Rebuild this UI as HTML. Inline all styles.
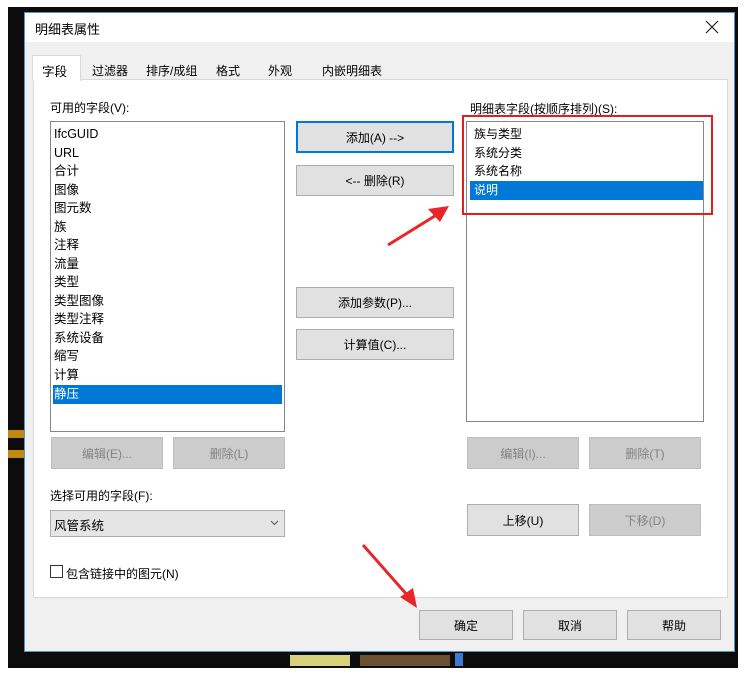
<!DOCTYPE html>
<html><head><meta charset="utf-8"><style>
*{box-sizing:border-box;margin:0;padding:0}
body{width:746px;height:675px;background:#fff;position:relative;overflow:hidden;font-family:"Liberation Sans","Noto Sans CJK SC",sans-serif;font-size:12px;color:#000}
.a{position:absolute}
.btn{position:absolute;background:#e1e1e1;border:1px solid #adadad;text-align:center;font-size:12px;display:flex;align-items:center;justify-content:center}
.dis{background:#cccccc;border-color:#bfbfbf;color:#838383}
.list{position:absolute;background:#fff;border:1px solid #828790}
.it{position:absolute;left:3px;height:19px;line-height:19px;font-size:12.5px}
.sel{background:#0078d7;color:#fff}
</style></head><body>
<div class="a" style="left:8px;top:7px;width:730px;height:661px;background:#0c0c0c"></div>
<div class="a" style="left:8px;top:430px;width:16px;height:8px;background:#c08a10"></div>
<div class="a" style="left:8px;top:450px;width:16px;height:8px;background:#c08a10"></div>
<div class="a" style="left:290px;top:655px;width:60px;height:11px;background:#d8d27a"></div>
<div class="a" style="left:360px;top:655px;width:90px;height:11px;background:#6a5030"></div>
<div class="a" style="left:455px;top:653px;width:8px;height:13px;background:#3a7ad0"></div>
<div class="a" style="left:24px;top:12px;width:711px;height:640px;background:#f0f0f0;border:1px solid #5a8fd0"></div>
<div class="a" style="left:25px;top:13px;width:709px;height:29px;background:#fff"></div>
<div class="a" style="left:35px;top:19px;font-size:13px">明细表属性</div>
<svg class="a" style="left:705px;top:20px" width="14" height="14"><path d="M1 1L13 13M13 1L1 13" stroke="#222" stroke-width="1.2"/></svg>
<div class="a" style="left:33px;top:79px;width:695px;height:519px;background:#fff;border:1px solid #d9d9d9"></div>
<div class="a" style="left:32px;top:55px;width:49px;height:26px;background:#fff;border:1px solid #d9d9d9;border-bottom:none"></div>
<div class="a" style="left:42px;top:61px;font-size:12.5px">字段</div>
<div class="a" style="left:92px;top:62px">过滤器</div>
<div class="a" style="left:146px;top:62px">排序/成组</div>
<div class="a" style="left:216px;top:62px">格式</div>
<div class="a" style="left:268px;top:62px">外观</div>
<div class="a" style="left:322px;top:62px">内嵌明细表</div>
<div class="a" style="left:50px;top:99px">可用的字段(V):</div>
<div class="a" style="left:470px;top:100px">明细表字段(按顺序排列)(S):</div>
<div class="list" style="left:50px;top:121px;width:235px;height:311px">
<div class="it" style="top:3px">IfcGUID</div>
<div class="it" style="top:22px">URL</div>
<div class="it" style="top:40px">合计</div>
<div class="it" style="top:59px">图像</div>
<div class="it" style="top:77px">图元数</div>
<div class="it" style="top:96px">族</div>
<div class="it" style="top:114px">注释</div>
<div class="it" style="top:133px">流量</div>
<div class="it" style="top:151px">类型</div>
<div class="it" style="top:170px">类型图像</div>
<div class="it" style="top:188px">类型注释</div>
<div class="it" style="top:207px">系统设备</div>
<div class="it" style="top:225px">缩写</div>
<div class="it" style="top:244px">计算</div>
<div class="it sel" style="top:263px;left:2px;width:229px;padding-left:1px">静压</div>
</div>
<div class="list" style="left:466px;top:121px;width:238px;height:301px">
<div class="it" style="top:3px;left:7px;font-size:12px">族与类型</div>
<div class="it" style="top:22px;left:7px;font-size:12px">系统分类</div>
<div class="it" style="top:40px;left:7px;font-size:12px">系统名称</div>
<div class="it sel" style="top:59px;left:3px;width:233px;padding-left:4px;font-size:12px">说明</div>
</div>
<div class="a" style="left:462px;top:115px;width:251px;height:100px;border:2px solid #e02020"></div>
<div class="btn" style="left:296px;top:121px;width:158px;height:32px;border:2px solid #0078d7">添加(A) --&gt;</div>
<div class="btn" style="left:296px;top:165px;width:158px;height:31px">&lt;-- 删除(R)</div>
<div class="btn" style="left:296px;top:287px;width:158px;height:31px">添加参数(P)...</div>
<div class="btn" style="left:296px;top:329px;width:158px;height:31px">计算值(C)...</div>
<div class="btn dis" style="left:51px;top:437px;width:112px;height:32px">编辑(E)...</div>
<div class="btn dis" style="left:173px;top:437px;width:112px;height:32px">删除(L)</div>
<div class="btn dis" style="left:467px;top:437px;width:112px;height:32px">编辑(I)...</div>
<div class="btn dis" style="left:589px;top:437px;width:112px;height:32px">删除(T)</div>
<div class="a" style="left:50px;top:487px">选择可用的字段(F):</div>
<div class="a" style="left:50px;top:510px;width:235px;height:27px;background:#e5e5e5;border:1px solid #adadad"></div>
<div class="a" style="left:54px;top:515px;font-size:12.5px">风管系统</div>
<svg class="a" style="left:270px;top:520px" width="9" height="6"><path d="M1 1L4.5 4.5L8 1" stroke="#555" fill="none"/></svg>
<div class="btn" style="left:467px;top:504px;width:112px;height:32px">上移(U)</div>
<div class="btn dis" style="left:589px;top:504px;width:112px;height:32px">下移(D)</div>
<div class="a" style="left:50px;top:565px;width:13px;height:13px;border:1px solid #333;background:#fff"></div>
<div class="a" style="left:66px;top:565px">包含链接中的图元(N)</div>
<div class="btn" style="left:419px;top:610px;width:94px;height:30px">确定</div>
<div class="btn" style="left:523px;top:610px;width:94px;height:30px">取消</div>
<div class="btn" style="left:627px;top:610px;width:94px;height:30px">帮助</div>
<svg class="a" style="left:0;top:0" width="746" height="675">
<path d="M388 245 L438 214" stroke="#e8262a" stroke-width="3" fill="none"/>
<path d="M449 206 L428 209 L440 222 Z" fill="#e8262a"/>
<path d="M363 545 L408 596" stroke="#e8262a" stroke-width="3" fill="none"/>
<path d="M417 608 L400 597 L413 588 Z" fill="#e8262a"/>
</svg>
</body></html>
